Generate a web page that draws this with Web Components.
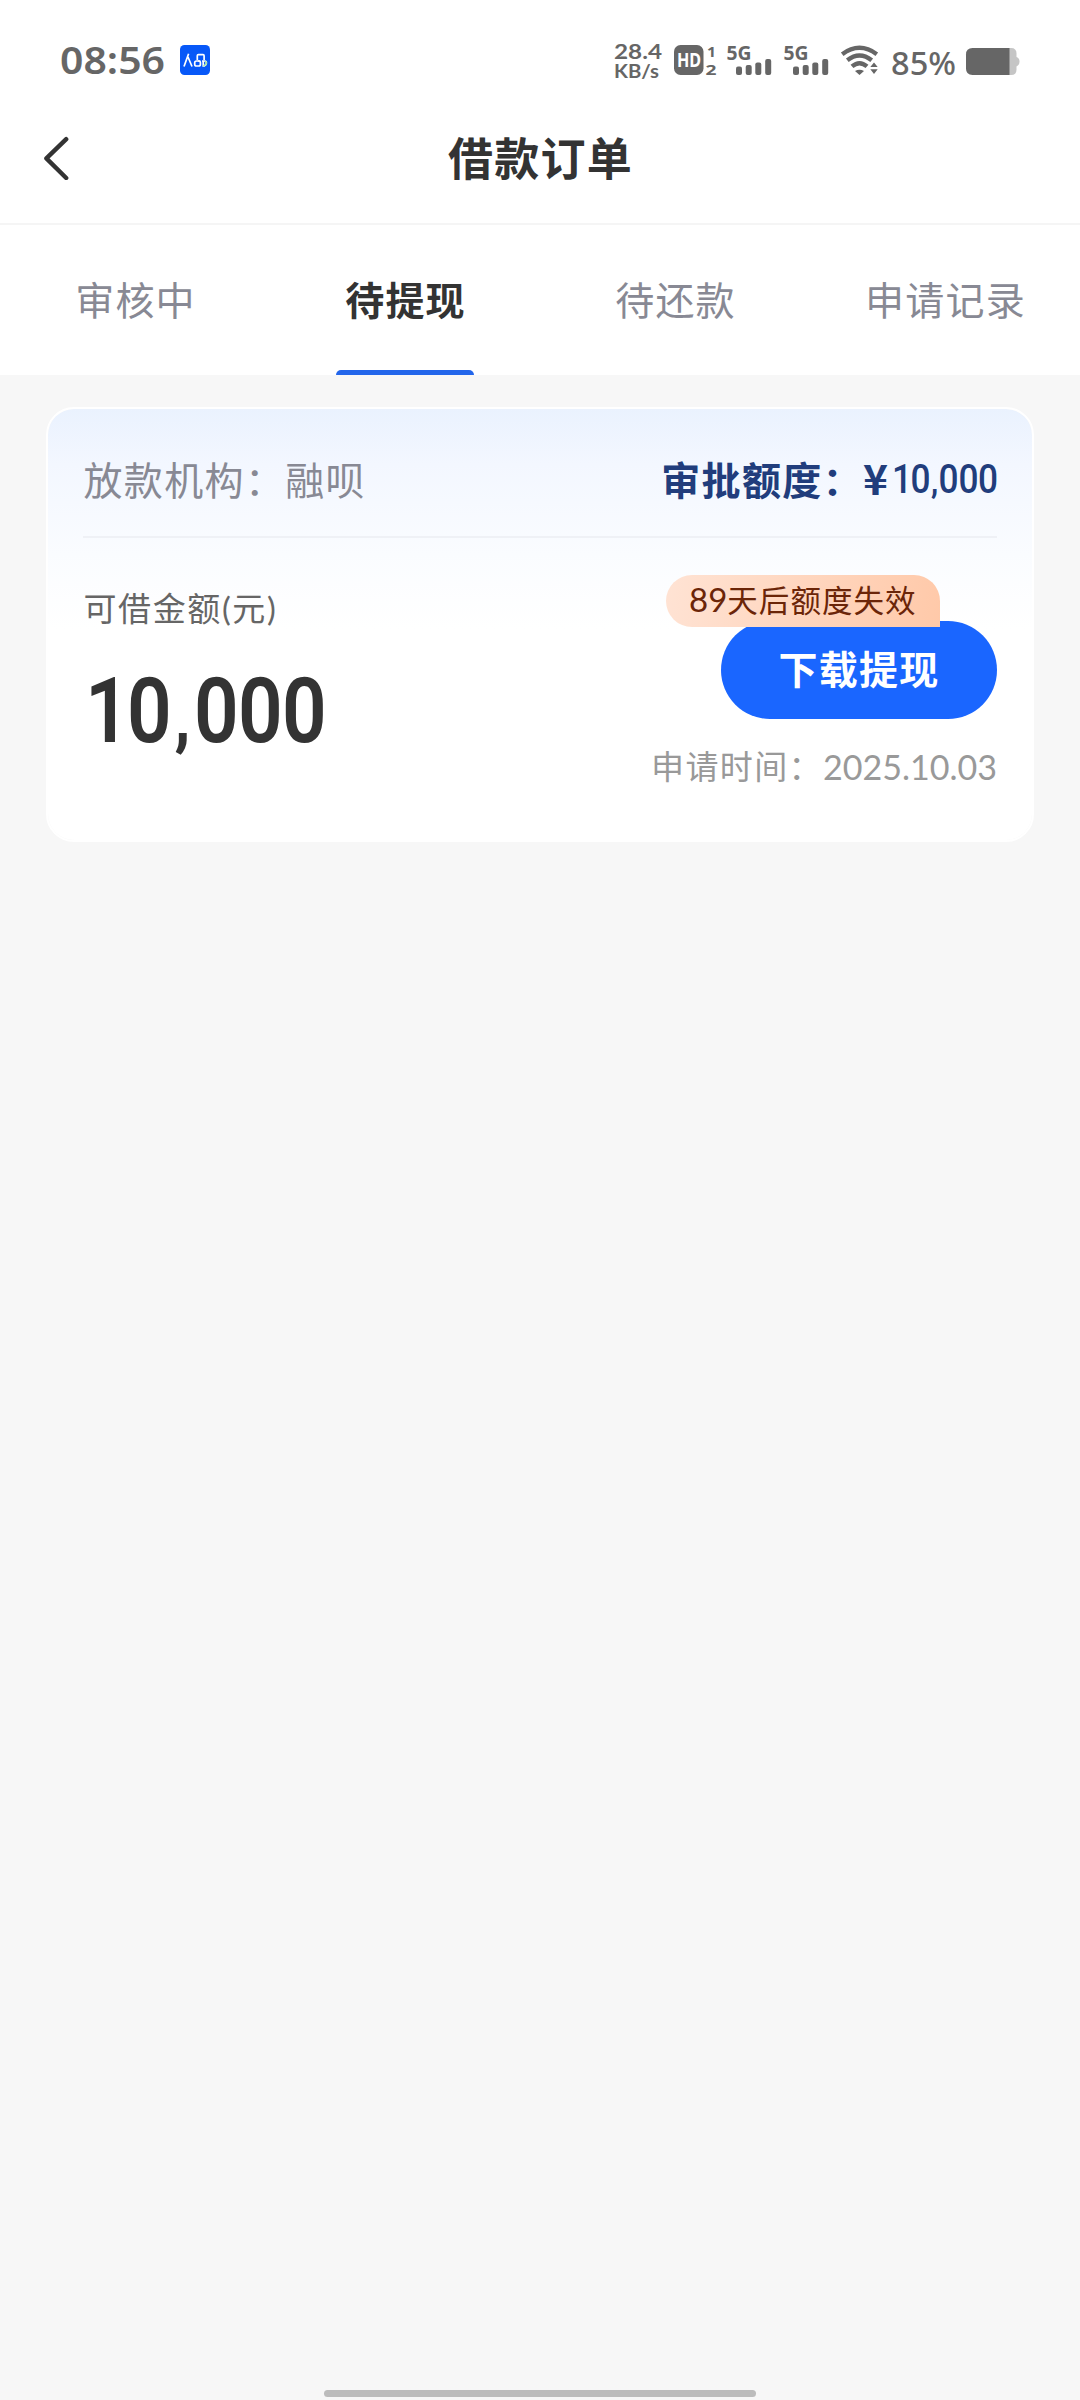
<!DOCTYPE html>
<html lang="zh-CN">
<head>
<meta charset="utf-8">
<meta name="viewport" content="width=device-width">
<title>借款订单</title>
<style>
html,body{margin:0;padding:0;background:#f7f7f7}
body{font-family:Lato,"Noto Sans CJK SC",sans-serif}
</style>
</head>
<body>
<loan-orders-page></loan-orders-page>
<script>
const define = (name, html) => customElements.define(name, class extends HTMLElement {
  constructor() {
    super();
    const t = document.createElement('template');
    t.innerHTML = html;
    this.attachShadow({mode: 'open'}).append(t.content.cloneNode(true));
  }
});

// Text scaled to an exact advance width, or, with xs, set glyph by glyph
customElements.define('fit-text', class extends HTMLElement {
  connectedCallback() {
    if (this.shadowRoot) return;
    const a = (n, d) => this.getAttribute(n) || d;
    const size = a('size', 30), y = a('y', a('h'));
    let text;
    if (a('xs')) {
      const sx = +a('sx', 1);
      const xs = a('xs').split(' ').map(v => (v / sx).toFixed(1)).join(' ');
      const inner = a('text').replace(',', `<tspan font-size="${size * .76}" font-weight="900">,</tspan>`);
      text = `<text transform="scale(${sx} 1)" x="${xs}" y="${y}" font-size="${size}">${inner}</text>`;
    } else {
      text = `<text x="0" y="${y}" font-size="${size}" textLength="${a('w')}" lengthAdjust="spacingAndGlyphs">${a('text', '')}</text>`;
    }
    this.attachShadow({mode: 'open'}).innerHTML = `
      <style>:host{display:block;flex:none}svg{display:block;overflow:visible}
      text{font-weight:${a('weight', 400)};font-family:${a('family', 'Lato')},"Noto Sans CJK SC",sans-serif;letter-spacing:0;fill:currentColor}</style>
      <svg width="${a('w')}" height="${a('h')}">${text}</svg>`;
  }
});

define('signal-bars', `
<style>:host{display:block;flex:none;width:46px;height:30px;color:#666}
svg{display:block;overflow:visible}text{font:700 20px "Noto Sans",sans-serif;fill:currentColor}</style>
<svg width="46" height="30" fill="#666">
<text x="-.5" y="15" textLength="25" lengthAdjust="spacingAndGlyphs">5G</text>
<rect x="9" y="21.5" width="6" height="8.5" rx="2"/><rect x="18.7" y="20" width="6" height="10" rx="2"/>
<rect x="28.3" y="17.5" width="6" height="12.5" rx="2"/><rect x="38.2" y="14" width="6" height="16" rx="2"/></svg>`);

define('status-bar', `
<style>
:host{display:flex;box-sizing:border-box;height:120px;padding:45px 60px 0 60px;color:#666;align-items:flex-start}
svg{display:block;flex:none;overflow:visible}
.app{margin-left:15px}
.speed{margin-left:404px;margin-top:-3px;display:flex;flex-direction:column;gap:3px}
.hd{margin-left:12px}
.s1{margin-left:10px}.s2{margin-left:11px}.wifi{margin-left:11px}.pct{margin-left:12px}.bat{margin-left:10px}
.hd text{font:700 16px "Noto Sans",sans-serif}
</style>
<fit-text text="08:56" w="105" h="30" y="28.5" size="38" weight="600" family="'Noto Sans'"></fit-text>
<svg class="app" width="30" height="30" fill="none" stroke="#fff" stroke-width="1.7"><rect width="30" height="30" rx="4.5" fill="#0758f8" stroke="none"/>
<path d="M8.6 8.7 L4 21.5 M8 12 L12 21.5"/><path d="M17.3 15V10.7Q17.3 9.6 18.4 9.6H23Q24.1 9.6 24.1 10.7V15"/><rect x="14.7" y="16" width="5.7" height="5" rx="1.8"/><path d="M18 16H20.4M22 16H24.8Q26.4 16 26.4 18T24.6 20.8H23.2V16" /><path d="M25 16.4Q27 17 26.3 19.4L23.4 20.8" stroke="#a9e8a1" stroke-width="1.3"/></svg>
<div class="speed">
<fit-text text="28.4" w="48" h="18" y="16.5" size="21.5" weight="700"></fit-text>
<fit-text text="KB/s" w="45" h="18" y="14.5" size="18" weight="700"></fit-text>
</div>
<svg class="hd" width="43" height="30"><rect width="29.5" height="30" rx="6.5" fill="#666"/>
<text x="3" y="22" textLength="24.2" lengthAdjust="spacingAndGlyphs" fill="#fff" style="font-size:19px">HD</text>
<text x="33" y="12" fill="#666" textLength="9" lengthAdjust="spacingAndGlyphs" style="font-size:15px">1</text>
<text x="31.6" y="30" fill="#666" textLength="11" lengthAdjust="spacingAndGlyphs" style="font-size:15px">2</text></svg>
<signal-bars class="s1"></signal-bars><signal-bars class="s2"></signal-bars>
<svg class="wifi" width="38" height="30" fill="none" stroke="#666" stroke-width="4.4">
<path d="M1.2 9.2Q18.5 -3.6 35.8 9.2"/><path d="M6.3 15.3Q18.5 5.8 30.7 15.3"/><path d="M11 21.4Q18.5 15 26 21.4"/>
<path d="M14 26Q18.5 23.5 23 26L18.5 30ZM33 17.5L36.7 22H29.3ZM33 29L36.7 24.3H29.3Z" fill="#666" stroke="none"/></svg>
<fit-text class="pct" text="85%" w="65" h="30" y="29.5" size="33" weight="500" family="'Noto Sans'"></fit-text>
<svg class="bat" width="54" height="30"><path d="M36 3H45Q50.5 3 50.5 8.5V24.5Q50.5 30 45 30H36Z" fill="#c5c5c5"/><path d="M50 12Q53.5 12.5 53.5 16.5T50 21.5Z" fill="#c5c5c5"/><path d="M6.5 3H43.5V30H6.5Q0 30 0 23.5V9.5Q0 3 6.5 3Z" fill="#666"/></svg>`);

define('nav-header', `
<style>
:host{display:flex;height:105px;box-sizing:border-box;border-bottom:2px solid #f5f5f5;justify-content:space-between;padding:0 43px;align-items:flex-start}
svg,i{display:block;width:27px;height:44px;margin-top:16px}
h1{margin:10px 0 0;font-size:45px;line-height:58px;font-weight:700;letter-spacing:1.2px;color:#333;padding-left:1px}
</style>
<svg viewBox="0 0 27 44" fill="none" stroke="#333" stroke-width="4.4" stroke-linecap="round" stroke-linejoin="round"><path d="M23.2 3.2L3.4 22.4L23.2 42"/></svg>
<h1><slot></slot></h1><i></i>`);

define('order-tab', `
<style>
:host{display:flex;flex:1;flex-direction:column;justify-content:space-between;align-items:center;height:150px;color:#888994;font-size:39px;letter-spacing:1.2px}
span{margin-top:46px;line-height:58px;padding-left:1px}i{display:none;width:138px;height:5px;border-radius:5px 5px 0 0;background:#2366eb}
:host([active]){color:#333;font-weight:700}:host([active]) i{display:block}
</style><span><slot></slot></span><i></i>`);

define('order-tabs', `<style>:host{display:flex;height:150px;background:#fff}</style><slot></slot>`);

define('withdraw-action', `
<style>
:host{display:flex;flex-direction:column;align-items:flex-end}
.badge{position:relative;z-index:1;box-sizing:border-box;width:274px;height:52px;margin:0 57px -6px 0;padding-left:23px;border-radius:26px 26px 0 26px;background:linear-gradient(100deg,#ffe3d4,#ffc9a9);color:#6b2508;font-size:30.5px;line-height:51px;letter-spacing:1.05px;white-space:nowrap}
.badge b{font:400 33px/1 Lato;letter-spacing:0}
.btn{border:0;padding:0;width:276px;height:98px;border-radius:49px;background:#1a66ff;color:#fff;font:700 39px/56px "Noto Sans CJK SC",sans-serif;letter-spacing:1.2px;padding-bottom:7px}
.time{display:flex;margin-top:18px;color:#999;font-size:33px;line-height:58px;letter-spacing:1.4px}
</style>
<div class="badge"><b>89</b>天后额度失效</div>
<button class="btn">下载提现</button>
<div class="time"><span>申请时间：</span><fit-text text="2025.10.03" w="174" h="58" y="42.5" size="35.5"></fit-text></div>`);

define('loan-card', `
<style>
:host{display:block;box-sizing:border-box;margin:32px 46px 0;height:435px;border-radius:28px;border:2.5px solid #fff;background:linear-gradient(#eaf2fe 0,#f3f7ff 55px,#fafcff 145px,#fff 220px) padding-box;padding:0 35px 0 35px}
.top{display:flex;justify-content:space-between;height:127px;border-bottom:2px solid #eff1f6;font-size:39px;letter-spacing:1.35px;line-height:58px}
.top>*{margin-top:42px}
.org{color:#888994;padding-left:.5px}.limit{display:flex;color:#213d7c;font-weight:700}
.yen{margin-right:3px}
.main{display:flex;justify-content:space-between;padding-top:37px}
.label{font-size:33px;line-height:48px;letter-spacing:1.6px;color:#666;margin:9px 0 28px;padding-left:.5px}
.sum{color:#333;margin-left:3px}
</style>
<div class="top"><div class="org">放款机构：融呗</div>
<div class="limit"><span>审批额度：</span><fit-text class="yen" text="¥" w="25" h="58" y="44" size="41" weight="700" family="'Noto Sans CJK SC'"></fit-text><fit-text text="10,000" w="106" h="58" y="42.5" size="41" weight="500" family="Roboto" sx=".86" xs="1 19.5 40 47.5 67.5 87"></fit-text></div></div>
<div class="main"><div><div class="label">可借金额(元)</div><fit-text class="sum" text="10,000" w="240" h="80" y="82" size="91" weight="600" family="Roboto" sx=".86" xs="-1 41 88.5 108 152 196"></fit-text></div>
<withdraw-action></withdraw-action></div>`);

define('loan-orders-page', `
<style>
:host{display:flex;flex-direction:column;width:1080px;height:2400px;background:#f7f7f7;overflow:hidden}
.head{background:#fff}
.home{width:432px;height:7px;border-radius:4px;background:#bcbcbc;margin:auto auto 3px}
</style>
<div class="head"><status-bar></status-bar><nav-header>借款订单</nav-header></div>
<order-tabs><order-tab>审核中</order-tab><order-tab active>待提现</order-tab><order-tab>待还款</order-tab><order-tab>申请记录</order-tab></order-tabs>
<loan-card></loan-card>
<div class="home"></div>`);
</script>
</body>
</html>
